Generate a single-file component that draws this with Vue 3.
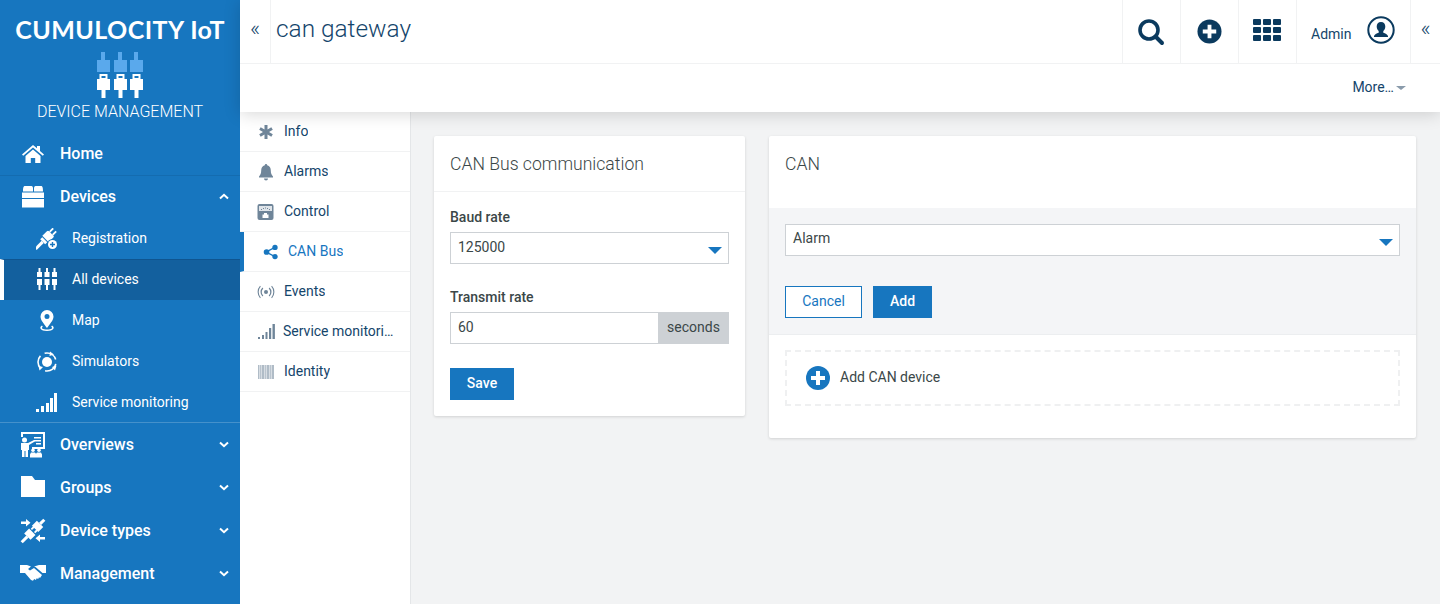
<script setup>
const mainTop = [{ label: 'Home', icon: 'home' }]
const deviceLinks = [
  { label: 'Registration', icon: 'register' },
  { label: 'All devices', icon: 'plugs', active: true },
  { label: 'Map', icon: 'pin' },
  { label: 'Simulators', icon: 'sim' },
  { label: 'Service monitoring', icon: 'bars' }
]
const mainBottom = [
  { label: 'Overviews', icon: 'board' },
  { label: 'Groups', icon: 'folder' },
  { label: 'Device types', icon: 'types' },
  { label: 'Management', icon: 'hands' }
]
const tabs = [
  { label: 'Info', icon: 'asterisk' },
  { label: 'Alarms', icon: 'bell' },
  { label: 'Control', icon: 'gauge' },
  { label: 'CAN Bus', icon: 'share', active: true },
  { label: 'Events', icon: 'radio' },
  { label: 'Service monitoring', icon: 'signal', narrow: true },
  { label: 'Identity', icon: 'barcode' }
]
const plugColumns = [0, 17, 33]
const barcode = [1, 2.500, 3.500, 5, 6, 7.500, 8.500, 10, 11, 12.500, 13.500, 15, 16]
const signal = [[1, 13, 2], [5, 11, 2], [8.500, 8, 2], [12, 4, 2.200], [15.500, 0, 2.400]]
</script>

<template>
  <div class="page">
    <aside class="sidebar">
      <div class="brand">
        <div class="brand-name">CUMULOCITY IoT</div>
        <svg class="brand-logo" width="46" height="46" viewBox="0 0 46 46">
          <g v-for="x in plugColumns" :key="x" :transform="`translate(${x} 0)`">
            <path fill="#5aa9ec" d="M4 0h4v8h5v12H0V8h4z" />
            <path fill="#fff" d="M2.500 22h8v5H13v11H8.500v8h-4v-8H0V27h2.500z" />
            <path fill="#1776bf" d="M4.500 26v-2h4v2z" />
          </g>
        </svg>
        <div class="brand-sub">DEVICE MANAGEMENT</div>
      </div>

      <nav>
        <a v-for="item in mainTop" :key="item.label" class="nav-item">
          <svg class="nav-icon" viewBox="-1 -1 26 26" fill="#fff">
            <path d="M12 3 1 12.500l1.200 1.300L12 5.400l9.800 8.400 1.200-1.300-4-3.400V4h-3v2.200z" />
            <path d="M4.500 14 12 7.600l7.500 6.400V21h-5.300v-5H9.800v5H4.500z" />
          </svg>
          {{ item.label }}
        </a>

        <a class="nav-item nav-open">
          <svg class="nav-icon" viewBox="-1 -1 26 26" fill="#fff">
            <path d="M2 7.500C2 3.500 2.500 2 4 2h6.500c1 0 1.500 1 1.500 2.500V7.500zM13 7.500V4.500C13 3 13.500 2 14.500 2H20c1.500 0 2 1.500 2 5.500zM1 8.500h22V14H1zM1 15h22v8.500H1z" />
          </svg>
          Devices
          <svg class="chevron" width="10" height="7" viewBox="0 0 10 7">
            <path d="M1 5.500 5 1.800l4 3.700" fill="none" stroke="#fff" stroke-width="2" />
          </svg>
        </a>

        <a
          v-for="link in deviceLinks"
          :key="link.label"
          class="sub-item"
          :class="{ active: link.active }"
        >
          <svg class="sub-icon" width="22" height="22" viewBox="0 0 22 22" fill="#fff">
            <template v-if="link.icon === 'register'">
              <g transform="rotate(45 9.500 11)">
                <rect x="6.500" y="-2" width="1.800" height="5" />
                <rect x="10.700" y="-2" width="1.800" height="5" />
                <path d="M5 4.500C5 3.500 5.500 3 6.500 3h6c1 0 1.500.5 1.500 1.500V11H5z" />
                <rect x="6" y="12" width="7" height="3" />
                <rect x="8" y="15" width="3" height="10" />
              </g>
              <circle cx="16.500" cy="16.500" r="5.500" fill="#1776bf" />
              <circle cx="16.500" cy="16.500" r="4.500" />
              <path d="M15.800 14h1.400v1.800H19v1.400h-1.800V19h-1.400v-1.800H14v-1.400h1.800z" fill="#1776bf" />
            </template>
            <template v-else-if="link.icon === 'plugs'">
              <g v-for="x in [0, 7.500, 15]" :key="x" :transform="`translate(${x} 0)`">
                <path d="M2.500 0h2v4H6v5H1V4h1.500zM1 11h5v6H4.500v5h-2v-5H1z" />
              </g>
            </template>
            <template v-else-if="link.icon === 'pin'">
              <path fill-rule="evenodd" d="M11 0a6.500 6.500 0 0 1 6.500 6.500c0 3.800-4 8-6.500 11.500C8.500 14.500 4.500 10.300 4.500 6.500A6.500 6.500 0 0 1 11 0zm0 4a2.500 2.500 0 1 0 0 5 2.500 2.500 0 0 0 0-5z" />
              <path d="M6 15.500c-3.500 2-1.500 5.500 5 5.500s8.500-3.500 5-5.500l-.8 1.200c2 1.300.3 2.800-4.200 2.800s-6.200-1.500-4.200-2.800z" />
            </template>
            <template v-else-if="link.icon === 'sim'">
              <circle cx="11" cy="11" r="5" />
              <circle cx="11" cy="11" r="9" fill="none" stroke="#fff" stroke-width="1.600" stroke-dasharray="14 4.850" stroke-dashoffset="-2" />
              <path d="M14 .5l4 3-4.500 1.500zM2.500 15l4.500 1-3.500 3.500zM20.500 14.500l-4.500 1.500 3 3.500z" />
            </template>
            <template v-else>
              <rect x="0" y="17" width="3" height="3" />
              <rect x="5" y="14" width="3" height="6" />
              <rect x="10" y="11" width="3" height="9" />
              <rect x="14" y="6" width="3" height="14" />
              <rect x="18" y="1" width="3" height="19" />
            </template>
          </svg>
          <span class="sub-label">{{ link.label }}</span>
        </a>

        <div class="nav-divider"></div>

        <a v-for="item in mainBottom" :key="item.label" class="nav-item">
          <svg class="nav-icon" viewBox="0 0 26 26" fill="#fff">
            <template v-if="item.icon === 'board'">
              <path d="M1 0h24v17H12v-2h11V2H3v3H1z" />
              <path d="M14 5h7v1.500h-7zM14 8h7v1.500h-7zM16 11h5v1.500h-5z" />
              <circle cx="4.500" cy="8" r="2.500" />
              <path d="M1 11h7l6-3 .8 1.500L9 13v5H8v7H5.500v-6h-1v6H2v-7H1zM10 22.500l1-2h4l1 1.200 1-1.200h4l1 2v3H10z" />
              <circle cx="13" cy="18.300" r="1.800" />
              <circle cx="19" cy="18.300" r="1.800" />
            </template>
            <template v-else-if="item.icon === 'folder'">
              <path d="M1 1h11l3 4h10v17H1z" />
            </template>
            <template v-else-if="item.icon === 'types'">
              <g transform="rotate(45 13 13)">
                <rect x="11.500" y="-3" width="3" height="6" />
                <path d="M8.500 3h9v7h-9zM9.800 10h1.800v3H9.800zM14.400 10h1.800v3h-1.800zM8.500 14h9v7h-9z" />
                <rect x="11.500" y="21" width="3" height="8" />
              </g>
              <path d="M1 3.500h5V1l4.500 3.800L6 8.500V6H1zM25 19h-5v-2.500L15.500 20.300 20 24v-2.500h5z" />
            </template>
            <template v-else>
              <path d="M0 4h7l4 1.500L8 8l2 1.500 4-2.500 8 7-2 3-1-.8-.8 1.800-1.500-.8-.8 1.800-1.700-1-1.200 1.800-2-.8L5 12H0zM14 5.500 19 4h7v8h-3.500l-7-6z" />
            </template>
          </svg>
          {{ item.label }}
          <svg class="chevron" width="10" height="7" viewBox="0 0 10 7">
            <path d="M1 1.500 5 5.200l4-3.700" fill="none" stroke="#fff" stroke-width="2" />
          </svg>
        </a>
      </nav>
    </aside>

    <div class="workspace">
      <header class="topbar">
        <div class="top-row">
          <button class="collapse">«</button>
          <h1 class="title">can gateway</h1>
          <div class="top-cell">
            <svg class="search-icon" width="28" height="28" viewBox="0 0 28 28">
              <circle cx="12" cy="12" r="9" fill="none" stroke="#0b3a5e" stroke-width="3.600" />
              <path d="m18.500 18.500 6.500 6.500" stroke="#0b3a5e" stroke-width="4" stroke-linecap="round" />
            </svg>
          </div>
          <div class="top-cell">
            <svg class="plus-icon" width="25" height="25" viewBox="0 0 26 26">
              <circle cx="13" cy="13" r="12.500" fill="#0b3a5e" />
              <path d="M11 6h4v5h5v4h-5v5h-4v-5H6v-4h5z" fill="#fff" />
            </svg>
          </div>
          <div class="top-cell">
            <svg class="grid-icon" width="30" height="24" viewBox="0 0 30 24" fill="#0b3a5e">
              <template v-for="y in [1, 9, 17]" :key="y">
                <rect v-for="x in [1, 11, 21]" :key="x" :x="x" :y="y" width="8" height="6" rx="1" />
              </template>
            </svg>
          </div>
          <div class="user-cell">
            <span class="user-name">Admin</span>
            <svg class="avatar" width="28" height="28" viewBox="0 0 28 28">
              <circle cx="14" cy="14" r="12.700" fill="#fff" stroke="#0b3a5e" stroke-width="2" />
              <path d="M14 6c2.800 0 4.300 2 4.300 4.600 0 2-1 3.700-2 4.500v1.600c2 .8 4.200 1.500 4.700 3.300v1H7v-1c.5-1.800 2.700-2.500 4.700-3.300v-1.600c-1-.8-2-2.500-2-4.500C9.700 8 11.200 6 14 6z" fill="#0b3a5e" />
            </svg>
          </div>
          <button class="collapse collapse-right">«</button>
        </div>
        <div class="more-row">
          <span>More…</span>
          <i class="more-caret"></i>
        </div>
      </header>

      <div class="body-row">
        <ul class="tabs">
          <li v-for="tab in tabs" :key="tab.label" class="tab" :class="{ active: tab.active, narrow: tab.narrow }">
            <svg class="tab-icon" width="18" height="18" viewBox="0 0 18 18" :fill="tab.active ? '#1776bf' : '#6f8599'">
              <template v-if="tab.icon === 'asterisk'">
                <path d="M7.500 2h3v4.400l3.800-2.200 1.500 2.600L12 9l3.800 2.200-1.500 2.600-3.800-2.200V16h-3v-4.400l-3.800 2.200-1.500-2.600L6 9 2.200 6.800l1.500-2.600 3.800 2.200z" />
              </template>
              <template v-else-if="tab.icon === 'bell'">
                <path d="M9 1a1.200 1.200 0 0 1 1.200 1.300c2.600.6 3.600 2.700 3.600 5.200 0 3 .8 4.500 2.200 6v1H2v-1c1.400-1.500 2.200-3 2.200-6 0-2.500 1-4.600 3.600-5.200A1.200 1.200 0 0 1 9 1zM7 15.500h4a2 2 0 0 1-4 0z" />
              </template>
              <template v-else-if="tab.icon === 'gauge'">
                <rect x="0.500" y="1" width="16" height="16" rx="2" />
                <path fill="#dfe4e9" d="M2 3h13v5H2z" />
                <path d="M4 6h1v1H4zM6 5h1v1H6zM8 4.500h1v1H8zM10 5h1v1h-1zM12 6h1v1h-1z" />
                <path fill="#fff" d="M7 10h3v1.500h1.500V15h-6v-3.500H7z" />
              </template>
              <template v-else-if="tab.icon === 'share'">
                <circle cx="4" cy="9" r="3.200" />
                <circle cx="13.500" cy="3.800" r="3" />
                <circle cx="13.500" cy="14.200" r="3" />
                <path d="m4 8 9-5 .8 1.500L5 9l8.800 4.500-.8 1.500-9-5z" />
              </template>
              <template v-else-if="tab.icon === 'radio'">
                <circle cx="9" cy="9" r="2" />
                <path d="M5.400 4.500 6.300 5.400a5 5 0 0 0 0 7.200l-.9.900a6.300 6.300 0 0 1 0-9zM12.600 4.500l-.9.900a5 5 0 0 1 0 7.200l.9.900a6.300 6.300 0 0 0 0-9z" />
                <path d="M3 2.800l.8.800a8 8 0 0 0 0 10.800l-.8.800a9.200 9.200 0 0 1 0-12.400zM15 2.800l-.8.800a8 8 0 0 1 0 10.800l.8.800a9.200 9.200 0 0 0 0-12.400z" />
              </template>
              <template v-else-if="tab.icon === 'signal'">
                <rect v-for="bar in signal" :key="bar[0]" :x="bar[0]" :y="bar[1] + 1" :width="bar[2]" :height="15 - bar[1]" />
              </template>
              <template v-else>
                <rect v-for="x in barcode" :key="x" :x="x" y="2" width="1" height="14" opacity=".55" />
              </template>
            </svg>
            <span class="tab-label">{{ tab.label }}</span>
          </li>
        </ul>

        <main class="content">
          <section class="card card-bus">
            <h2 class="card-title">CAN Bus communication</h2>
            <div class="card-body">
              <label class="field-label">Baud rate</label>
              <div class="control select">
                125000
                <i class="select-caret"></i>
              </div>
              <label class="field-label transmit">Transmit rate</label>
              <div class="input-group">
                <div class="control grow">60</div>
                <span class="addon">seconds</span>
              </div>
              <div class="btn btn-primary save">Save</div>
            </div>
          </section>

          <section class="card card-can">
            <h2 class="card-title tall">CAN</h2>
            <div class="form-panel">
              <div class="control select alarm">
                Alarm
                <i class="select-caret"></i>
              </div>
              <div class="actions">
                <div class="btn btn-outline">Cancel</div>
                <div class="btn btn-primary">Add</div>
              </div>
            </div>
            <div class="add-wrap">
              <div class="add-box">
                <svg width="24" height="24" viewBox="0 0 24 24">
                  <circle cx="12" cy="12" r="12" fill="#1776bf" />
                  <path d="M10 5h4v5h5v4h-5v5h-4v-5H5v-4h5z" fill="#fff" />
                </svg>
                <span class="add-label">Add CAN device</span>
              </div>
            </div>
          </section>
        </main>
      </div>
    </div>
  </div>
</template>

<style>
html,
body {
  margin: 0;
  overflow: hidden;
}
</style>

<style scoped>
.page {
  display: flex;
  width: 1440px;
  height: 604px;
  overflow: hidden;
  font-family: Roboto, "Liberation Sans", sans-serif;
  font-size: 14px;
  color: #3b4748;
  background: #f2f3f4;
}

.sidebar {
  flex: none;
  width: 240px;
  background: #1776bf;
  color: #fff;
}

.brand {
  display: flex;
  flex-direction: column;
  align-items: center;
  height: 132px;
  padding-top: 14px;
  box-sizing: border-box;
}

.brand-name {
  font-family: Lato, sans-serif;
  font-size: 25px;
  font-weight: 700;
  line-height: 30px;
  letter-spacing: 0.45px;
  white-space: nowrap;
}

.brand-logo {
  margin-top: 8px;
}

.brand-sub {
  margin-top: 4px;
  font-size: 16px;
  font-weight: 300;
  line-height: 20px;
}

.nav-item {
  display: flex;
  align-items: center;
  height: 43px;
  padding: 0 11px 0 20px;
  font-size: 16px;
  font-weight: 500;
}

.nav-icon {
  flex: none;
  width: 26px;
  height: 26px;
  margin-right: 14px;
}

.nav-open {
  border-top: 1px solid #146cb0;
  box-sizing: border-box;
  padding-bottom: 2px;
}

.chevron {
  margin-left: auto;
}

.sub-item {
  display: flex;
  align-items: center;
  height: 41px;
  padding-left: 36px;
  font-size: 14px;
}

.sub-label {
  margin-bottom: 2px;
}

.sub-item.active {
  box-sizing: border-box;
  padding-left: 32px;
  padding-bottom: 2px;
  background: #13609e;
  border-left: 4px solid #fff;
  border-top: 1px solid #0f5590;
}

.sub-item.active .sub-label {
  margin-bottom: 0;
}

.sub-icon {
  flex: none;
  margin-right: 14px;
}

.nav-divider {
  height: 1px;
  margin-top: -1px;
  background: rgba(255, 255, 255, 0.2);
}

.workspace {
  flex: 1;
  display: flex;
  flex-direction: column;
  min-width: 0;
}

.topbar {
  position: relative;
  z-index: 2;
  background: #fff;
  box-shadow: 0 2px 16px rgba(0, 0, 0, 0.16);
}

.top-row {
  display: flex;
  align-items: stretch;
  height: 64px;
  box-sizing: border-box;
  border-bottom: 1px solid #f1f2f3;
}

.collapse {
  flex: none;
  width: 31px;
  padding: 0 0 6px;
  border: 0;
  border-right: 1px solid #f1f2f3;
  background: none;
  font-family: Roboto, sans-serif;
  font-size: 22px;
  font-weight: 300;
  color: #14456b;
}

.collapse-right {
  width: 30px;
  border-right: 0;
  border-left: 1px solid #f1f2f3;
}

.title {
  flex: 1;
  margin: 0;
  padding-left: 5px;
  font-size: 24.4px;
  font-weight: 300;
  line-height: 58px;
  color: #14456b;
}

.top-cell {
  display: flex;
  align-items: center;
  justify-content: center;
  width: 58px;
  box-sizing: border-box;
  border-left: 1px solid #f1f2f3;
}

.search-icon {
  margin-left: -1px;
}

.plus-icon {
  margin-left: -1px;
}

.grid-icon {
  margin-top: -4px;
  margin-left: -2px;
}

.user-cell {
  display: flex;
  align-items: center;
  gap: 16px;
  width: 114px;
  box-sizing: border-box;
  padding-left: 14px;
  border-left: 1px solid #f1f2f3;
  color: #14456b;
}

.user-name {
  margin-top: 5px;
}

.avatar {
  margin-top: -3px;
}

.more-row {
  display: flex;
  align-items: center;
  justify-content: flex-end;
  height: 48px;
  padding-right: 34px;
  color: #14456b;
}

.more-row span {
  margin-bottom: 2px;
}

.more-caret {
  margin-left: 2px;
  border-top: 4px solid #8a9bab;
  border-left: 5px solid transparent;
  border-right: 5px solid transparent;
}

.body-row {
  flex: 1;
  display: flex;
  min-height: 0;
}

.tabs {
  flex: none;
  width: 171px;
  margin: 0;
  padding: 0;
  list-style: none;
  box-sizing: border-box;
  background: #fff;
  border-right: 1px solid #e4e6e8;
}

.tab {
  display: flex;
  align-items: center;
  height: 40px;
  box-sizing: border-box;
  padding-left: 17px;
  border-bottom: 1px solid #f1f2f3;
  color: #14456b;
}

.tab-icon {
  flex: none;
  margin-right: 9px;
}

.tab.active {
  padding-left: 17px;
  border-left: 4px solid #1776bf;
  color: #1776bf;
}

.tab.active .tab-icon {
  margin-left: 2px;
  margin-right: 9px;
  width: 16px;
}

.tab.narrow .tab-icon {
  margin-right: 8px;
}

.tab-label {
  overflow: hidden;
  max-width: 111px;
  margin-bottom: 2px;
  white-space: nowrap;
  text-overflow: ellipsis;
}

.content {
  flex: 1;
  display: flex;
  align-items: flex-start;
  gap: 24px;
  padding: 24px 24px 0 23px;
}

.card {
  background: #fff;
  border-radius: 2px;
  box-shadow: 0 1px 3px rgba(0, 0, 0, 0.14);
}

.card-bus {
  flex: none;
  width: 311px;
  height: 280px;
}

.card-can {
  flex: 1;
  height: 302px;
}

.card-title {
  margin: 0;
  height: 56px;
  box-sizing: border-box;
  padding: 0 16px;
  border-bottom: 1px solid #f1f2f3;
  font-size: 17.6px;
  font-weight: 300;
  line-height: 56px;
  color: #3b4748;
}

.card-title.tall {
  height: 72px;
  border-bottom: 0;
}

.card-body {
  padding: 16px 16px 0;
}

.field-label {
  display: block;
  height: 24px;
  font-size: 14px;
  font-weight: 500;
  line-height: 18px;
}

.transmit {
  margin-top: 24px;
}

.control {
  display: flex;
  align-items: center;
  height: 32px;
  box-sizing: border-box;
  padding: 0 7px 2px;
  border: 1px solid #cdd1d5;
  background: #fff;
  font-size: 14px;
}

.alarm {
  padding-bottom: 4px;
}

.select {
  position: relative;
}

.select-caret {
  position: absolute;
  right: 6px;
  top: 14px;
  border-top: 7px solid #1776bf;
  border-left: 7px solid transparent;
  border-right: 7px solid transparent;
}

.input-group {
  display: flex;
}

.grow {
  flex: 1;
  border-right: 0;
}

.addon {
  display: flex;
  align-items: center;
  justify-content: center;
  width: 71px;
  padding-bottom: 2px;
  box-sizing: border-box;
  background: #cdd1d5;
}

.btn {
  display: inline-flex;
  align-items: center;
  justify-content: center;
  height: 32px;
  box-sizing: border-box;
  padding-bottom: 3px;
  font-size: 14px;
}

.btn-primary {
  width: 59px;
  background: #1776bf;
  color: #fff;
  font-weight: 500;
}

.save {
  width: 64px;
  margin-top: 24px;
}

.btn-outline {
  width: 77px;
  border: 1px solid #1776bf;
  background: #fff;
  color: #1776bf;
}

.form-panel {
  height: 127px;
  box-sizing: border-box;
  padding: 16px 16px 0;
  background: #f4f5f7;
  border-bottom: 1px solid #eceef0;
}

.actions {
  display: flex;
  gap: 11px;
  margin-top: 30px;
}

.add-wrap {
  padding: 15px 16px 0;
}

.add-box {
  display: flex;
  align-items: center;
  gap: 10px;
  height: 56px;
  box-sizing: border-box;
  padding-left: 19px;
  border: 2px dashed #eff0f1;
}

.add-label {
  margin-bottom: 2px;
}
</style>
